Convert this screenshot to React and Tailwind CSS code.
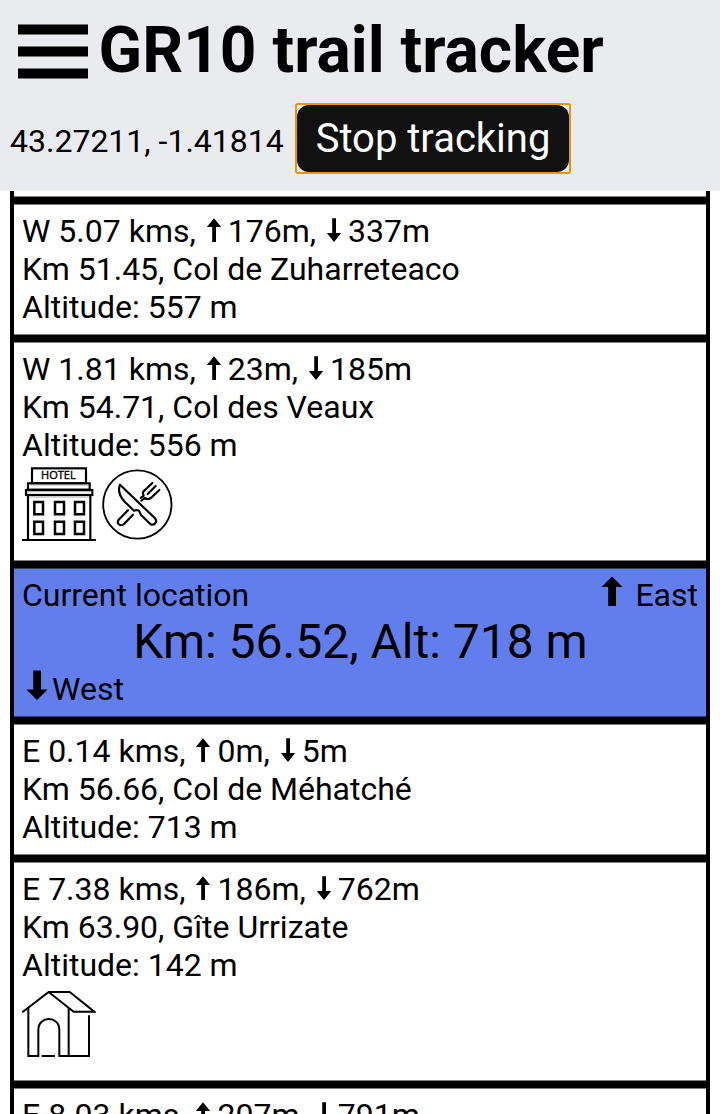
import React from "react";

function ArrowUp() {
  return (
    <svg className="ml-[2px] mr-[5px] inline-block align-baseline" width="17" height="24" viewBox="0 0 17 24">
      <path d="M8 0.3 L15.200 8.9 L10 8.9 L10 24 L6.200 24 L6.200 8.9 L0.800 8.9 Z" />
    </svg>
  );
}

function ArrowDown() {
  return (
    <svg className="ml-[2px] mr-[5px] inline-block align-baseline" width="17" height="24" viewBox="0 0 17 24">
      <path d="M8 24 L15.200 15.1 L10 15.1 L10 0.300 L6.200 0.300 L6.200 15.1 L0.800 15.1 Z" />
    </svg>
  );
}

function Hotel() {
  return (
    <svg width="74" height="75" viewBox="36 18 222 225" fill="none" stroke="#000" strokeWidth="6.5">
      <rect x="66" y="25" width="162" height="45" />
      <rect x="54" y="70" width="185" height="19" />
      <path d="M58 75H235" stroke="#aaa" strokeWidth="3" />
      <rect x="48" y="90" width="199" height="15" />
      <path d="M52 95H243M58 111H238" stroke="#aaa" strokeWidth="3" />
      <path d="M54 107V240M241 107V240M36 240H258" />
      <path strokeWidth="7.5" d="M73 126h26v37h-26zM135 126h27v37h-27zM195 126h27v37h-27zM73 185h26v37h-26zM135 185h27v37h-27zM195 185h27v37h-27z" />
      <text x="145" y="58" textAnchor="middle" textLength="104" lengthAdjust="spacingAndGlyphs" fill="#000" stroke="#000" strokeWidth="1" className="font-['Open_Sans',sans-serif] text-[30px]">HOTEL</text>
    </svg>
  );
}

function Restaurant() {
  return (
    <svg width="71" height="71" viewBox="275 26 213 213" fill="none" stroke="#000" strokeWidth="6.5" strokeLinejoin="round" strokeLinecap="round">
      <circle cx="381" cy="132.500" r="102.500" strokeWidth="5.500" />
      <path d="M329 73 L434 174 C443 184 431 198 420 191 L392 164 L386 151 L379 149 L371 151 L343 124 C328 108 322 91 329 73Z" />
      <path d="M353 150 L325 178 C317 190 330 200 341 191 L368 163" />
      <path d="M391 113 L400 106 C396 96 397 94 404 89 L426 68M412 101 L436 77M393 121 L403 113 C412 119 418 116 424 111 L447 89" />
    </svg>
  );
}

function Cabin() {
  return (
    <svg width="74" height="70" viewBox="37 31 222 210" fill="none" stroke="#000" strokeWidth="6">
      <path d="M38 98 L117 37 H180 L254 96 H192 L117 37" />
      <path d="M56 84V229H86V151C86 107 149 107 149 151V229H238V107M177 86V229M96 229H136" />
    </svg>
  );
}

function Divider({ top = "bg-[#7f7f7f]", bottom = "bg-[#7f7f7f]" }) {
  return (
    <div className="h-[9px] bg-black">
      <div className={`h-px ${top}`} />
      <div className="h-[7px]" />
      <div className={`h-px ${bottom}`} />
    </div>
  );
}

function Stop({ direction, distance, up, down, place, altitude, children }) {
  return (
    <section className="px-2 pb-2 pt-[7px]">
      <p>{direction} {distance} kms, <ArrowUp />{up}m, <ArrowDown />{down}m</p>
      {place && <p>{place}</p>}
      {altitude && <p>Altitude: {altitude} m</p>}
      {children}
    </section>
  );
}

function CurrentLocation() {
  return (
    <section className="flex h-[147px] flex-col bg-[#627eed] px-2 pt-[7px]">
      <div className="flex justify-between">
        <span>Current location</span>
        <span>
          <svg className="mr-[4px] inline-block align-baseline" width="22" height="30" viewBox="0 0 22 30">
            <path d="M11 0.500 L21.500 11 L15 11 L15 30 L7.200 30 L7.200 11 L0.500 11 Z" />
          </svg>
          {" "}East
        </span>
      </div>
      <div className="pl-px text-center text-[48px] leading-[56px]">Km: 56.52, Alt: 718 m</div>
      <div>
        <svg className="ml-[3.500px] mr-[4.500px] inline-block align-baseline" width="22" height="30" viewBox="0 0 22 30">
          <path d="M11 30 L21.500 19.500 L15 19.500 L15 0.500 L7.200 0.500 L7.200 19.500 L0.500 19.500 Z" />
        </svg>
        West
      </div>
    </section>
  );
}

export default function App() {
  return (
    <div className="flex h-[1114px] flex-col overflow-hidden bg-white font-[Roboto,sans-serif] text-[32px] leading-[38px] text-black">
      <header className="h-[191px] shrink-0 border-b border-[#f5f5f7] bg-[#eaebef]">
        <div className="flex h-[103px] items-start pl-[18px] pt-3">
          <svg className="mt-3" width="70" height="56" viewBox="0 0 70 56">
            <path d="M0 .5H70V10.500H0ZM0 22.500H70V32.500H0ZM0 44.500H70V54.500H0Z" />
          </svg>
          <h1 className="ml-[10.500px] mt-px whitespace-nowrap text-[64px] font-bold leading-[75px]">GR10 trail tracker</h1>
        </div>
        <div className="flex items-start pl-[10px]">
          <span className="mt-[19px] w-[285px] whitespace-nowrap">43.27211, -1.41814</span>
          <button className="h-[71px] w-[276px] rounded-[3px] border-2 border-[#e59700]">
            <span className="flex h-[67px] items-center justify-center whitespace-nowrap rounded-[12px] bg-[#111] text-[40px] text-white">Stop tracking</span>
          </button>
        </div>
      </header>
      <main className="mx-[10px] h-[923px] overflow-hidden border-x-4 border-black pt-[5px]">
        <Divider />
        <Stop direction="W" distance="5.07" up="176" down="337" place="Km 51.45, Col de Zuharreteaco" altitude="557" />
        <Divider />
        <Stop direction="W" distance="1.81" up="23" down="185" place="Km 54.71, Col des Veaux" altitude="556">
          <div className="flex h-[88px] items-start gap-[6px] pt-[2px]">
            <Hotel />
            <div className="pt-[3px]"><Restaurant /></div>
          </div>
        </Stop>
        <Divider bottom="bg-[#324077]" />
        <CurrentLocation />
        <Divider top="bg-[#324077]" />
        <Stop direction="E" distance="0.14" up="0" down="5" place="Km 56.66, Col de Méhatché" altitude="713" />
        <Divider />
        <Stop direction="E" distance="7.38" up="186" down="762" place="Km 63.90, Gîte Urrizate" altitude="142">
          <div className="h-[88px] pt-[6px]"><Cabin /></div>
        </Stop>
        <Divider />
        <Stop direction="E" distance="8.03" up="207" down="791" />
      </main>
    </div>
  );
}
